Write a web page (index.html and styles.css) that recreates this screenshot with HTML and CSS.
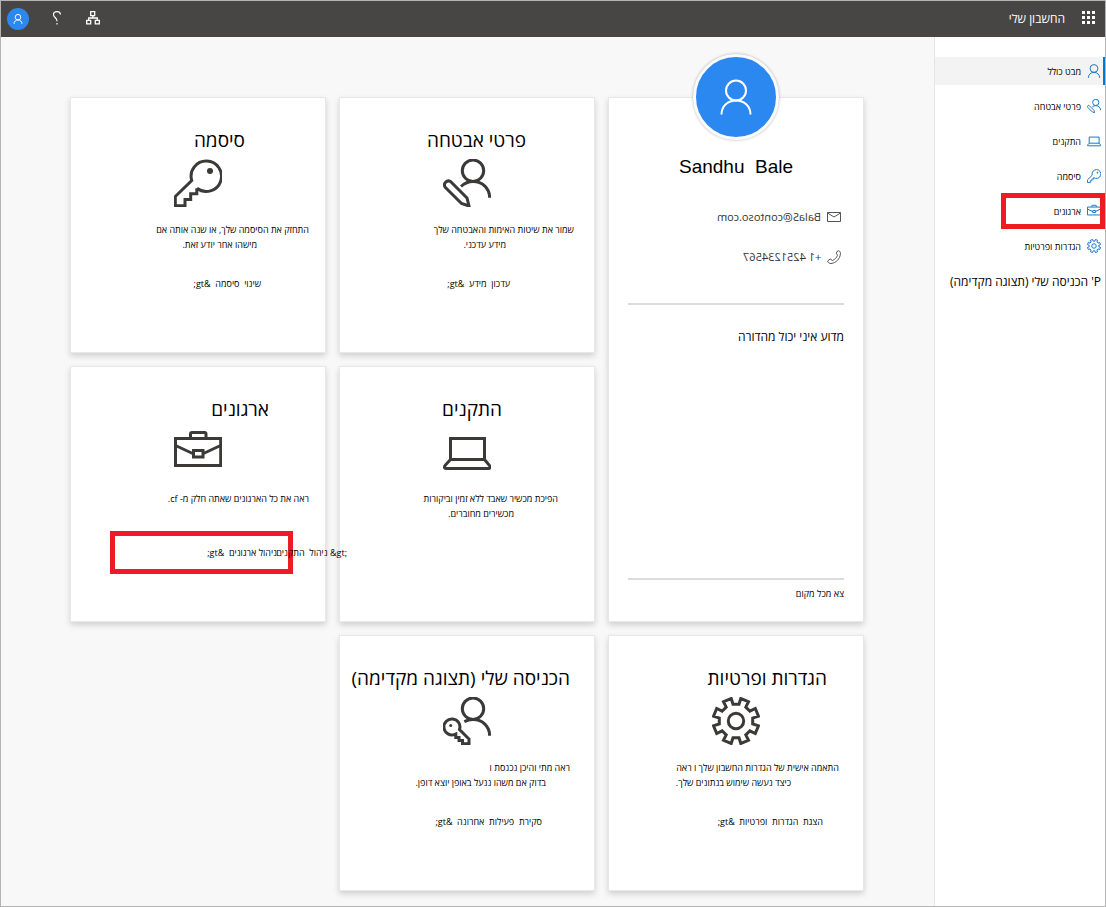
FILE: index.html
```
<!DOCTYPE html>
<html lang="he" dir="rtl">
<head>
<meta charset="utf-8">
<title>החשבון שלי</title>
<link rel="stylesheet" href="styles.css">
</head>
<body>
<svg class="sprite" aria-hidden="true">
  <symbol id="person" viewBox="0 0 32 36"><circle cx="16" cy="11.5" r="10"/><path d="M1.5 35.5C1.5 27 8 21.5 16 21.5S30.500 27 30.500 35.500"/></symbol>
  <symbol id="security" viewBox="0 0 48 48"><circle cx="30" cy="11.700" r="10.700"/><path d="M18 27.500C21.500 24.300 25.500 22.600 30 22.600C39.500 22.600 46.600 29.500 46.600 38.700"/><path d="M2.200 28.200L18.500 44.500L26 47L24 39L7.500 22.500A4 4 0 0 0 2.200 28.200z"/></symbol>
  <symbol id="key" viewBox="0 0 48 48"><path d="M23 29.300A15.200 15.200 0 1 0 17.700 21.500L1.300 37.500V46.700H11V40.500H16.700V34.700H22.800V29.200"/><circle class="dot" cx="36" cy="12" r="3"/></symbol>
  <symbol id="briefcase" viewBox="0 0 48 48"><path d="M1.500 10.500H46.700V37.500H1.500zM16.500 10V6Q16.500 4.500 18 4.500H30.500Q32 4.500 32 6V10M1.500 17.500L18.700 25.500M29.500 25.500L46.500 17.500M19.500 22.500H29V29H19.500z"/></symbol>
  <symbol id="laptop" viewBox="0 0 48 48"><path d="M7.500 10.500H41.500V31.500H7.500zM7.500 31.500L2 37.500Q0.500 40.500 3 40.500H45.500Q48 40.500 46.500 37.500L41.500 31.500"/></symbol>
  <symbol id="gear" viewBox="0 0 48 48"><circle cx="24" cy="24" r="7.700"/><path d="M19.200 1.500L21 7.300H27L28.800 1.500L36.500 4.700L33.800 10.100L37.900 14.200L43.300 11.500L46.500 19.200L40.700 21V27L46.500 28.800L43.300 36.500L37.900 33.800L33.800 37.900L36.500 43.300L28.800 46.500L27 40.700H21L19.200 46.500L11.500 43.300L14.200 37.900L10.100 33.800L4.700 36.500L1.500 28.800L7.300 27V21L1.500 19.200L4.700 11.500L10.100 14.200L14.200 10.100L11.500 4.700z"/></symbol>
  <symbol id="signin" viewBox="0 0 48 48"><circle cx="30" cy="11.700" r="10.700"/><path d="M21.300 24.700C24 23.300 27 22.600 30 22.600C39.500 22.600 46.600 29.500 46.600 38.700M12 37.300A8 8 0 1 1 16.500 32.500L26 42V46.700H19.500V43.500H16V40.500H12.800V37z"/><circle class="dot" cx="7.700" cy="28.500" r="1.500"/></symbol>
</svg>

<header class="topbar">
  <button class="bar-button" type="button" aria-label="מפעיל היישומים">
    <svg width="14" height="14" viewBox="0 0 14 14" fill="#fff"><path d="M0 0h3v3H0zM5 0h3v3H5zM10 0h3v3h-3zM0 5h3v3H0zM5 5h3v3H5zM10 5h3v3h-3zM0 10h3v3H0zM5 10h3v3H5zM10 10h3v3h-3z"/></svg>
  </button>
  <span class="brand">החשבון שלי</span>
  <div class="bar-tools">
    <button class="bar-button" type="button" aria-label="ארגון">
      <svg width="14" height="14" viewBox="0 0 14 14" fill="none" stroke="#fff" stroke-width="1.300"><path d="M4.700 .7h4v4h-4zM.7 9.300h4v3.500h-4zM9.300 9.300h4v3.500h-4zM6.900 4.700V7M2.700 9.300V7h8.600v2.300"/></svg>
    </button>
    <button class="bar-button" type="button" aria-label="עזרה">
      <svg width="10" height="14" viewBox="0 0 10 14" fill="none" stroke="#fff" stroke-width="1.200"><path d="M8.500 3.500C8.300 1.500 7 .7 5 .7S1.500 2 1.500 3.700C1.500 6.500 5 6.700 5 10.200M5 12v1.500"/></svg>
    </button>
    <button class="bar-button bar-avatar" type="button" aria-label="חשבון">
      <svg class="line thin" width="10" height="10"><use href="#person"/></svg>
    </button>
  </div>
</header>

<div class="page">
  <nav class="sidebar">
    <a class="nav-item active" href="#"><svg class="line thin" width="14" height="14"><use href="#person"/></svg>מבט כולל</a>
    <a class="nav-item" href="#"><svg class="line thin" width="14" height="14"><use href="#security"/></svg>פרטי אבטחה</a>
    <a class="nav-item" href="#"><svg class="line thin" width="14" height="14"><use href="#laptop"/></svg>התקנים</a>
    <a class="nav-item" href="#"><svg class="line thin" width="14" height="14"><use href="#key"/></svg>סיסמה</a>
    <a class="nav-item marked" href="#"><svg class="line thin" width="14" height="14"><use href="#briefcase"/></svg>ארגונים</a>
    <a class="nav-item" href="#"><svg class="line thin" width="14" height="14"><use href="#gear"/></svg>הגדרות ופרטיות</a>
    <a class="nav-item nav-large" href="#">P' הכניסה שלי (תצוגה מקדימה)</a>
  </nav>

  <main class="cards">
    <section class="card profile">
      <div class="avatar"><svg class="line" width="32" height="36"><use href="#person"/></svg></div>
      <h1 class="name" dir="ltr">Sandhu&nbsp; Bale</h1>
      <div class="contact">
        <svg width="14" height="10" viewBox="0 0 14 10" fill="none" stroke="#555"><path d="M.5.5h13v9H.5zM.5 1L7 5l6.500-4"/></svg>
        <span class="mirrored" dir="ltr">BalaS@contoso.com</span>
      </div>
      <div class="contact">
        <svg width="14" height="14" viewBox="0 0 14 14" fill="none" stroke="#555"><path d="M10.500 1C12 .2 13.500 1.500 13.500 3.500C13 9 9 13 4 13.500C2 13.500.3 12 .6 11L3.200 9L5.500 10.500C8 9.500 9.700 7.500 10.500 5.300L9.300 3.200z"/></svg>
        <span class="mirrored" dir="ltr">+1 4251234567</span>
      </div>
      <hr class="rule">
      <p class="question">מדוע איני יכול מהדורה</p>
      <div class="profile-foot">
        <hr class="rule">
        <a class="signout" href="#">צא מכל מקום</a>
      </div>
    </section>

    <section class="card">
      <h2 class="title in-68">פרטי אבטחה</h2>
      <svg class="line card-icon"><use href="#security"/></svg>
      <p class="desc"><span class="in-20">שמור את שיטות האימות והאבטחה שלך</span><span class="in-88">מידע עדכני.</span></p>
      <a class="action in-84" href="#">עדכון &nbsp;מידע &nbsp;&amp;gt;</a>
    </section>

    <section class="card">
      <h2 class="title in-80">סיסמה</h2>
      <svg class="line card-icon"><use href="#key"/></svg>
      <p class="desc"><span class="in-16">התחזק את הסיסמה שלך, או שנה אותה אם</span><span class="in-68">מישהו אחר יודע זאת.</span></p>
      <a class="action in-64" href="#">שינוי &nbsp;סיסמה &nbsp;&amp;gt;</a>
    </section>

    <section class="card">
      <h2 class="title in-92">התקנים</h2>
      <svg class="line card-icon"><use href="#laptop"/></svg>
      <p class="desc"><span class="in-36">הפיכת מכשיר שאבד ללא זמין וביקורות</span><span class="in-80">מכשירים מחוברים.</span></p>
      <a class="action spill" href="#"><bdi dir="ltr">ניהול &nbsp;התקנים &amp;gt;</bdi></a>
    </section>

    <section class="card">
      <h2 class="title in-56">ארגונים</h2>
      <svg class="line card-icon"><use href="#briefcase"/></svg>
      <p class="desc"><span class="in-16">ראה את כל הארגונים שאתה חלק מ- cf.</span></p>
      <a class="action action-marked in-48" href="#">ניהול ארגונים &nbsp;&amp;gt;</a>
    </section>

    <section class="card">
      <h2 class="title in-36">הגדרות ופרטיות</h2>
      <svg class="line card-icon"><use href="#gear"/></svg>
      <p class="desc"><span class="in-24">התאמה אישית של הגדרות החשבון שלך ו ראה</span><span class="in-72">כיצד נעשה שימוש בנתונים שלך.</span></p>
      <a class="action in-40" href="#">הצגת &nbsp;הגדרות &nbsp;ופרטיות &nbsp;&amp;gt;</a>
    </section>

    <section class="card">
      <h2 class="title in-24">הכניסה שלי (תצוגה מקדימה)</h2>
      <svg class="line card-icon"><use href="#signin"/></svg>
      <p class="desc"><span class="in-24">ראה מתי והיכן נכנסת ו</span><span class="in-48">בדוק אם משהו ננעל באופן יוצא דופן.</span></p>
      <a class="action in-52" href="#">סקירת &nbsp;פעילות &nbsp;אחרונה &nbsp;&amp;gt;</a>
    </section>
  </main>
</div>
</body>
</html>
```
FILE: styles.css
```
*, *::before, *::after { box-sizing: border-box; }

body {
  margin: 0;
  min-height: 100vh;
  display: flex;
  flex-direction: column;
  border: 1px solid #b4b4b4;
  background: #f8f8f8;
  color: #000;
  font-family: "Open Sans", "Liberation Sans", sans-serif;
  font-size: 9px;
  line-height: 15px;
}

h1, h2, p { margin: 0; font-weight: 400; }
a { color: inherit; text-decoration: none; }
svg { flex: none; }

.sprite { position: absolute; width: 0; height: 0; }
.line { fill: none; stroke: currentColor; stroke-width: 3px; }
.line.thin { stroke-width: 1px; }
symbol path, symbol circle { vector-effect: non-scaling-stroke; }
symbol .dot { fill: currentColor; stroke: none; }

.topbar {
  display: flex;
  align-items: center;
  height: 36px;
  padding: 0 8px 0 6px;
  background: #484644;
  color: #fff;
}
.bar-button {
  display: flex;
  align-items: center;
  justify-content: center;
  width: 16px;
  height: 24px;
  padding: 0 0 2px;
  border: 0;
  background: none;
  color: #fff;
}
.brand { margin-inline-start: 16px; font-size: 12px; line-height: 20px; }
.bar-tools { display: flex; align-items: center; gap: 20px; margin-inline-start: auto; }
.bar-avatar { width: 22px; height: 22px; padding: 0; border-radius: 50%; background: #2b88f0; }

.page { flex: 1; display: flex; }

.sidebar {
  flex: none;
  display: flex;
  flex-direction: column;
  gap: 7px;
  width: 171px;
  padding-top: 20px;
  border-inline-end: 1px solid #e6e6e6;
  background: #fff;
}
.nav-item {
  position: relative;
  display: flex;
  align-items: center;
  gap: 6px;
  height: 28px;
  padding-inline-start: 4px;
  white-space: nowrap;
}
.nav-item svg { color: #1b78c8; }
.active { background: #f3f3f3; }
.active::after {
  content: "";
  position: absolute;
  inset: 0 0 0 auto;
  width: 2px;
  background: #0078d4;
}
.marked::after {
  content: "";
  position: absolute;
  inset: -4px 0 -4px auto;
  width: 104px;
  border: 5px solid #ed1c24;
}
.nav-large { font-size: 12px; }

.cards {
  flex: 1;
  display: grid;
  grid-template-columns: repeat(3, minmax(0, 256px));
  grid-auto-rows: minmax(256px, auto);
  gap: 13px;
  justify-content: center;
  align-content: start;
  padding: 60px 17px 12px 16px;
}
.card {
  display: flex;
  flex-direction: column;
  padding: 26px 0 20px;
  border: 1px solid #e8e8e8;
  background: #fff;
  box-shadow: 0 3px 6px rgba(0, 0, 0, .16);
}
.title { font-size: 19px; line-height: 32px; white-space: nowrap; }
.card-icon {
  align-self: center;
  width: 48px;
  height: 48px;
  margin-top: 3px;
  color: #3b3a39;
}
.desc { min-height: 30px; margin-top: 15px; white-space: nowrap; }
.desc span { display: block; }
.action { margin-top: 24px; white-space: nowrap; }
.action-marked { position: relative; }
.action-marked::after {
  content: "";
  position: absolute;
  inset: -14px 32px -14px 39px;
  border: 5px solid #ed1c24;
}
.spill { position: relative; z-index: 1; margin-inline-start: 247px; }

.in-16 { padding-inline-start: 16px; }
.in-20 { padding-inline-start: 20px; }
.in-24 { padding-inline-start: 24px; }
.in-36 { padding-inline-start: 36px; }
.in-40 { padding-inline-start: 40px; }
.in-48 { padding-inline-start: 48px; }
.in-52 { padding-inline-start: 52px; }
.in-56 { padding-inline-start: 56px; }
.in-64 { padding-inline-start: 64px; }
.in-68 { padding-inline-start: 68px; }
.in-72 { padding-inline-start: 72px; }
.in-80 { padding-inline-start: 80px; }
.in-84 { padding-inline-start: 84px; }
.in-88 { padding-inline-start: 88px; }
.in-92 { padding-inline-start: 92px; }

.profile { grid-row: span 2; padding: 0 19px 20px; }
.avatar {
  align-self: center;
  display: flex;
  align-items: center;
  justify-content: center;
  width: 86px;
  height: 86px;
  margin-top: -44px;
  border: 3px solid #fafafa;
  border-radius: 50%;
  background: #2b88f0;
  color: #fff;
  box-shadow: 0 0 3px rgba(0, 0, 0, .3);
}
.avatar .line { stroke-width: 2px; }
.name {
  margin: 13px 0 8px;
  font-family: "Liberation Sans", sans-serif;
  font-size: 19px;
  line-height: 28px;
  text-align: center;
}
.contact {
  display: flex;
  align-items: center;
  gap: 6px;
  margin-top: 16px;
  padding-inline-start: 3px;
  color: #333;
  font-size: 11px;
  line-height: 24px;
}
.mirrored { transform: scaleX(-1); }
.rule { width: 100%; height: 2px; margin: 0; border: 0; background: #dcdcdc; }
.contact + .rule { margin-top: 34px; }
.question { margin-top: 22px; font-size: 12px; line-height: 20px; }
.profile-foot { margin-top: auto; }
.signout { display: block; margin-top: 6px; }
```
